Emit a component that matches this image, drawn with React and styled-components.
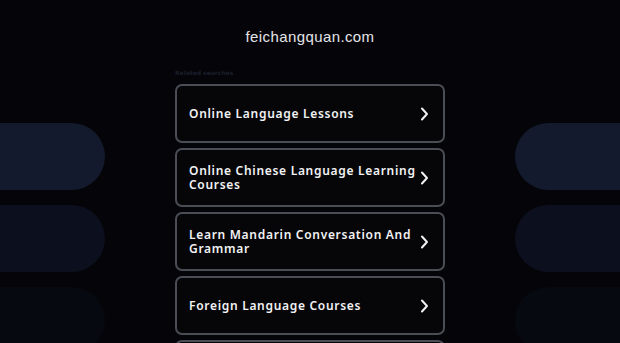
import React from "react";
import styled, { createGlobalStyle } from "styled-components";

const Global = createGlobalStyle`
  html, body { margin: 0; padding: 0; background: #050509; }
  body { overflow: hidden; }
`;

const Page = styled.div`
  width: 620px;
  height: 343px;
  overflow: hidden;
  background: #050509;
  display: grid;
  grid-template-columns: 105px 1fr 105px;
`;

const Rail = styled.div`
  display: flex;
  flex-direction: column;
  gap: 15px;
  padding-top: 123px;
`;

const Pill = styled.div`
  height: 67px;
  flex-shrink: 0;
  background: ${(p) => p.$bg};
  border-radius: ${(p) => (p.$side === "left" ? "0 34px 34px 0" : "34px 0 0 34px")};
`;

const Main = styled.main`
  display: flex;
  flex-direction: column;
  align-items: center;
  padding-top: 28px;
`;

const Title = styled.h1`
  margin: 0;
  font-family: "Liberation Sans", Arial, sans-serif;
  font-weight: 400;
  font-size: 15px;
  letter-spacing: 0.4px;
  line-height: 18px;
  color: #e4e4e8;
`;

const Section = styled.section`
  width: 270px;
  margin-top: 23px;
  display: flex;
  flex-direction: column;
`;

const Label = styled.div`
  font-family: "DejaVu Sans", sans-serif;
  font-weight: 700;
  font-size: 6px;
  line-height: 8px;
  color: #1b1e2b;
  margin-bottom: 7px;
`;

const List = styled.div`
  display: flex;
  flex-direction: column;
  gap: 5px;
`;

const Card = styled.a`
  box-sizing: border-box;
  height: 59px;
  flex-shrink: 0;
  display: flex;
  align-items: center;
  justify-content: space-between;
  padding: 0 14px 0 12px;
  border: 2px solid #4a4d56;
  border-radius: 7px;
  background: #060609;
  text-decoration: none;
`;

const CardText = styled.span`
  width: 232px;
  font-family: "Noto Sans", sans-serif;
  font-weight: 600;
  font-size: 12px;
  line-height: 14px;
  letter-spacing: 0.7px;
  color: #f2f2f4;
`;

const Chevron = () => (
  <svg width="9" height="14" viewBox="0 0 9 14" fill="none">
    <path d="M2 1.5 L7 7 L2 12.5" stroke="#f2f2f4" strokeWidth="2" strokeLinecap="round" strokeLinejoin="round" />
  </svg>
);

const items = [
  "Online Language Lessons",
  "Online Chinese Language Learning Courses",
  "Learn Mandarin Conversation And Grammar",
  "Foreign Language Courses",
  "Chinese Lessons",
];

const pills = ["#141a2e", "#0c0f1e", "#070911"];

export default function App() {
  return (
    <>
      <Global />
      <Page>
        <Rail>
          {pills.map((c) => (
            <Pill key={c} $bg={c} $side="left" />
          ))}
        </Rail>
        <Main>
          <Title>feichangquan.com</Title>
          <Section>
            <Label>Related searches</Label>
            <List>
              {items.map((t) => (
                <Card key={t} href="#">
                  <CardText>{t}</CardText>
                  <Chevron />
                </Card>
              ))}
            </List>
          </Section>
        </Main>
        <Rail>
          {pills.map((c) => (
            <Pill key={c} $bg={c} $side="right" />
          ))}
        </Rail>
      </Page>
    </>
  );
}
